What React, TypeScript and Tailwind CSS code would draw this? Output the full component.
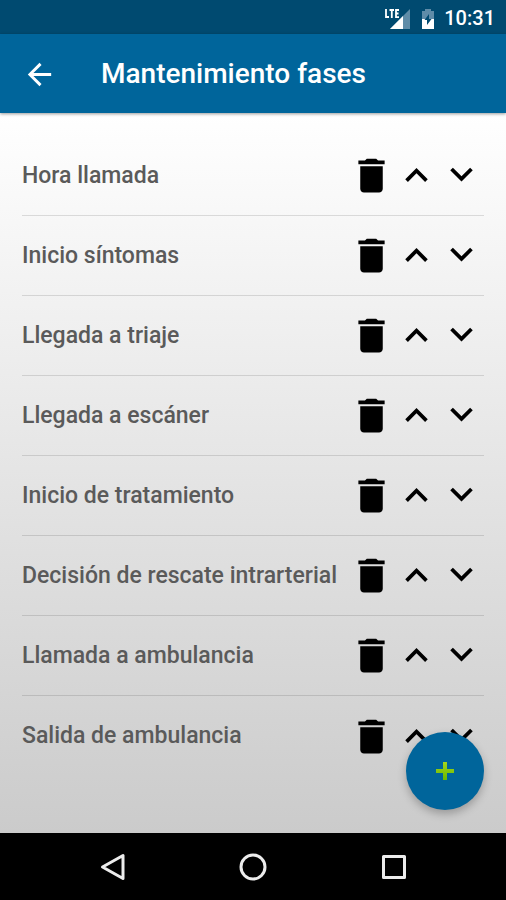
import React from "react";
import { MdArrowBack, MdDelete } from "react-icons/md";

const PHASES = [
  "Hora llamada",
  "Inicio síntomas",
  "Llegada a triaje",
  "Llegada a escáner",
  "Inicio de tratamiento",
  "Decisión de rescate intrarterial",
  "Llamada a ambulancia",
  "Salida de ambulancia",
];

function SignalIcon() {
  return (
    <svg className="h-6 w-7" viewBox="0 0 28 24" aria-hidden="true">
      <path d="M26 3v20H6z" fill="#5f8ca8" />
      <path d="M0 0h16v13H0z" fill="#004a70" />
      <path d="M19 10v13H6z" fill="#fff" />
      <path
        d="M2 3v8h3M5.500 4h4.500M7.800 4v8M15 4h-3v7.200h3M12 7.500h2.500"
        fill="none"
        stroke="#fff"
        strokeWidth="1.8"
      />
    </svg>
  );
}

function BatteryIcon() {
  return (
    <svg className="h-6 w-4" viewBox="0 0 16 24" aria-hidden="true">
      <path d="M5 3h6v2h3v9H2V5h3z" fill="#5f8ca8" />
      <path d="M2 13h12v10H2z" fill="#fff" />
      <path d="M9 8v5h2.500L7 19v-5H4.500z" fill="#004a70" />
    </svg>
  );
}

function StatusBar() {
  return (
    <div className="flex h-[34px] items-center justify-end bg-[#004a70] pt-px pr-[11px] text-white">
      <SignalIcon />
      <span className="mx-2 flex">
        <BatteryIcon />
      </span>
      <span className="text-[20px] leading-6 font-medium">10:31</span>
    </div>
  );
}

function PhaseRow({ name }: { name: string }) {
  return (
    <li className="flex h-20 items-center border-b border-black/12 last:border-b-0">
      <span className="flex-1 text-[23px] leading-7 font-medium whitespace-nowrap text-[#5a5a5a]">
        {name}
      </span>
      <button type="button" aria-label={`Eliminar ${name}`}>
        <MdDelete className="size-[45px]" />
      </button>
      <button type="button" aria-label={`Subir ${name}`}>
        <svg className="size-[45px]" viewBox="0 0 24 24" fill="currentColor">
          <path d="M7.410 15.410L12 10.830l4.590 4.580L18 14l-6-6-6 6z" />
        </svg>
      </button>
      <button type="button" aria-label={`Bajar ${name}`}>
        <svg className="size-[45px]" viewBox="0 0 24 24" fill="currentColor">
          <path d="M7.410 7.840L12 12.420l4.590-4.580L18 9.250l-6 6-6-6z" />
        </svg>
      </button>
    </li>
  );
}

function NavigationBar() {
  return (
    <nav className="grid h-[67px] grid-cols-3 items-center justify-items-center bg-black px-[42px] text-[#ececec]">
      <button type="button" aria-label="Atrás">
        <svg className="size-8" viewBox="0 0 32 32" fill="none" stroke="currentColor" strokeWidth="3" strokeLinejoin="round">
          <path d="M27 4.500v23L6.500 16z" />
        </svg>
      </button>
      <button type="button" aria-label="Inicio">
        <svg className="size-8" viewBox="0 0 32 32" fill="none" stroke="currentColor" strokeWidth="3">
          <circle cx="16" cy="16" r="12" />
        </svg>
      </button>
      <button type="button" aria-label="Recientes">
        <svg className="size-8" viewBox="0 0 32 32" fill="none" stroke="currentColor" strokeWidth="3" strokeLinejoin="round">
          <path d="M5.500 5.500h21v21h-21z" />
        </svg>
      </button>
    </nav>
  );
}

export default function App() {
  return (
    <div className="flex min-h-screen flex-col font-['Roboto',sans-serif]">
      <StatusBar />

      <header className="relative z-10 flex h-[79px] items-center bg-[#00659b] pt-px pl-[22px] text-white shadow-[0_1px_3px_rgba(0,0,0,0.4)]">
        <button type="button" aria-label="Volver">
          <MdArrowBack className="size-[35px]" />
        </button>
        <h1 className="ml-11 text-[28px] leading-8 font-medium">Mantenimiento fases</h1>
      </header>

      <main className="relative flex-1 bg-linear-to-b from-white to-[#cbcbcb] px-[22px] pt-[23px]">
        <ul>
          {PHASES.map((name) => (
            <PhaseRow key={name} name={name} />
          ))}
        </ul>

        {/* Botón flotante para añadir fase */}
        <button
          type="button"
          aria-label="Añadir fase"
          className="absolute right-[22px] bottom-[23px] flex size-[78px] items-center justify-center rounded-full bg-[#00659b] shadow-[0_4px_8px_rgba(0,0,0,0.25)]"
        >
          <svg className="size-5" viewBox="0 0 20 20">
            <defs>
              <linearGradient id="plus" x1="0" y1="0" x2="0" y2="1">
                <stop offset="0" stopColor="#a4d61c" />
                <stop offset="1" stopColor="#68b800" />
              </linearGradient>
            </defs>
            <path d="M8 1h4v7h7v4h-7v7H8v-7H1V8h7z" fill="url(#plus)" />
          </svg>
        </button>
      </main>

      <NavigationBar />
    </div>
  );
}
